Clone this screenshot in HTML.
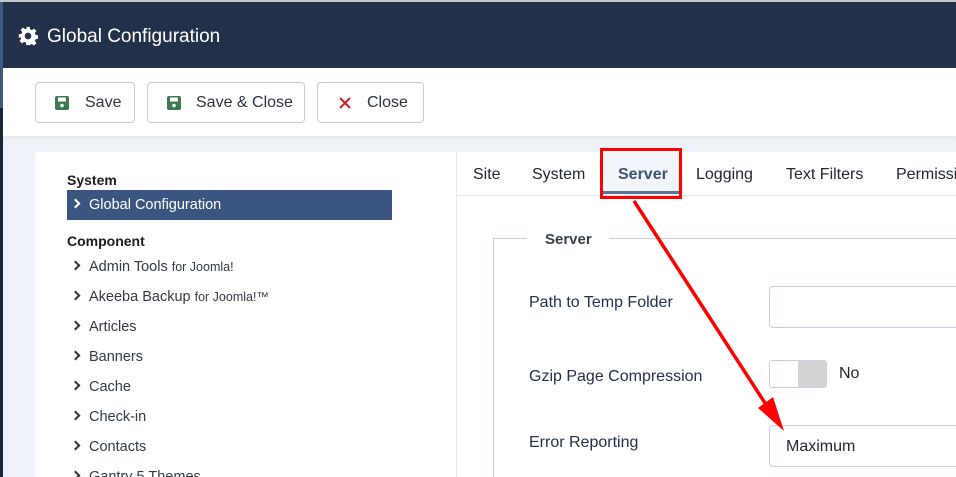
<!DOCTYPE html>
<html><head><style>
*{box-sizing:border-box;margin:0;padding:0}
html,body{width:956px;height:477px;overflow:hidden}
body{background:#eef2f9;font-family:"Liberation Sans",sans-serif;position:relative;color:#22262e}
.abs{position:absolute}
.hdr{left:0;top:2px;width:956px;height:66px;background:#22304a}
.topline{left:0;top:0;width:956px;height:2px;background:#c8c8c8}
.strip{left:0;top:2px;width:3px;height:475px;background:#1a2538}
.strip2{left:0;top:2px;width:3px;height:106px;background:#3c5a85}
.title{left:47px;top:26px;color:#fff;font-size:19px}
.tb{left:3px;top:68px;width:953px;height:68px;background:#fff;box-shadow:0 2px 4px rgba(0,0,0,.05)}
.btn{top:82px;height:41px;border:1px solid #c5ccd6;border-radius:4px;background:#fff;font-size:16px;color:#2c3440;line-height:40px}
.card{left:35px;top:152px;width:921px;height:325px;background:#fff}
.sec{font-weight:bold;font-size:14px;color:#1c1c1c}
.item{left:72px;font-size:14.5px;color:#323a45;white-space:nowrap}
.item small{font-size:12.5px}
.chev{display:inline-block;width:7px;height:7px;border-right:2px solid #333;border-top:2px solid #333;transform:rotate(45deg);margin-right:10px;position:relative;top:-2px}
.tab{top:166px;font-size:16px;color:#22262e}
.lbl{left:529px;font-size:16px;color:#22304a}
.inp{left:769px;width:200px;border:1px solid #c5cfdd;border-radius:4px;background:#fff}
</style></head><body>
<div class="abs topline"></div>
<div class="abs hdr"></div>
<div class="abs strip"></div><div class="abs strip2"></div>
<svg class="abs" style="left:18px;top:26px" width="20" height="20" viewBox="0 0 24 24"><path fill="#fff" d="M10 1h4l.6 3.1 2 .9 2.7-1.8 2.8 2.8-1.8 2.7.9 2 3.1.6v4l-3.1.6-.9 2 1.8 2.7-2.8 2.8-2.7-1.8-2 .9L14 23h-4l-.6-3.1-2-.9-2.7 1.8-2.8-2.8 1.8-2.7-.9-2L1 14v-4l3.1-.6.9-2L3.2 4.7 6 1.9l2.7 1.8 2-.9zM12 8a4 4 0 100 8 4 4 0 000-8z"/></svg>
<div class="abs title">Global Configuration</div>
<div class="abs tb"></div>
<div class="abs btn" style="left:35px;width:100px"><svg style="position:absolute;left:19px;top:13px" width="14" height="14" viewBox="0 0 14 14"><rect width="14" height="14" rx="2" fill="#3d7a4f"/><rect x="3" y="1.5" width="8" height="4" fill="#fff"/><circle cx="7" cy="9.5" r="1.8" fill="#fff"/></svg><span style="position:absolute;left:49px">Save</span></div>
<div class="abs btn" style="left:147px;width:158px"><svg style="position:absolute;left:19px;top:13px" width="14" height="14" viewBox="0 0 14 14"><rect width="14" height="14" rx="2" fill="#3d7a4f"/><rect x="3" y="1.5" width="8" height="4" fill="#fff"/><circle cx="7" cy="9.5" r="1.8" fill="#fff"/></svg><span style="position:absolute;left:48px">Save &amp; Close</span></div>
<div class="abs btn" style="left:317px;width:107px"><svg style="position:absolute;left:21px;top:14px" width="12" height="12" viewBox="0 0 12 12"><path d="M1 1L11 11M11 1L1 11" stroke="#d0202a" stroke-width="2"/></svg><span style="position:absolute;left:49px">Close</span></div>
<div class="abs card"></div>
<div class="abs" style="left:456px;top:152px;width:1px;height:325px;background:#e3e7ee"></div>
<div class="abs sec" style="left:67px;top:172px">System</div>
<div class="abs" style="left:67px;top:190px;width:325px;height:30px;background:#3a5580"></div>
<div class="abs item" style="top:197px;color:#fff"><span class="chev" style="border-color:#fff"></span>Global Configuration</div>
<div class="abs sec" style="left:67px;top:233px">Component</div>
<div class="abs item" style="top:259px"><span class="chev"></span>Admin Tools <small>for Joomla!</small></div>
<div class="abs item" style="top:289px"><span class="chev"></span>Akeeba Backup <small>for Joomla!™</small></div>
<div class="abs item" style="top:319px"><span class="chev"></span>Articles</div>
<div class="abs item" style="top:349px"><span class="chev"></span>Banners</div>
<div class="abs item" style="top:379px"><span class="chev"></span>Cache</div>
<div class="abs item" style="top:409px"><span class="chev"></span>Check-in</div>
<div class="abs item" style="top:439px"><span class="chev"></span>Contacts</div>
<div class="abs item" style="top:469px"><span class="chev"></span>Gantry 5 Themes</div>
<div class="abs" style="left:457px;top:195px;width:499px;height:1px;background:#dfe3ea"></div>
<div class="abs" style="left:603px;top:151px;width:76px;height:44px;background:#f2f5f9"></div>
<div class="abs" style="left:603px;top:191px;width:76px;height:3px;background:#5d7396"></div>
<div class="abs tab" style="left:473px">Site</div>
<div class="abs tab" style="left:532px">System</div>
<div class="abs tab" style="left:618px;font-weight:bold;color:#3d5277">Server</div>
<div class="abs tab" style="left:696px">Logging</div>
<div class="abs tab" style="left:786px">Text Filters</div>
<div class="abs tab" style="left:896px">Permissions</div>
<div class="abs" style="left:600px;top:148px;width:82px;height:51px;border:3px solid #f00"></div>
<div class="abs" style="left:493px;top:238px;width:463px;height:239px;border-left:1px solid #c5cfdd;border-top:1px solid #c5cfdd"></div>
<div class="abs" style="left:527px;top:229px;width:82px;height:20px;background:#fff"></div>
<div class="abs" style="left:545px;top:231px;font-size:15px;font-weight:bold;color:#3a3f47">Server</div>
<div class="abs lbl" style="top:294px">Path to Temp Folder</div>
<div class="abs inp" style="top:286px;height:42px"></div>
<div class="abs lbl" style="top:368px">Gzip Page Compression</div>
<div class="abs" style="left:769px;top:360px;width:58px;height:28px;border:1px solid #c5cfdd;border-radius:3px;background:#fff;overflow:hidden"><div style="position:absolute;left:28px;top:0;width:30px;height:28px;background:#d3d3d3"></div></div>
<div class="abs" style="left:839px;top:365px;font-size:16px">No</div>
<div class="abs lbl" style="top:434px">Error Reporting</div>
<div class="abs inp" style="top:425px;height:42px"></div>
<div class="abs" style="left:786px;top:438px;font-size:16px">Maximum</div>
<svg class="abs" style="left:0;top:0" width="956" height="477"><line x1="634" y1="201" x2="776" y2="420" stroke="#f00" stroke-width="3.5"/><polygon points="784,431 758,408 773,397" fill="#f00"/></svg>
</body></html>
